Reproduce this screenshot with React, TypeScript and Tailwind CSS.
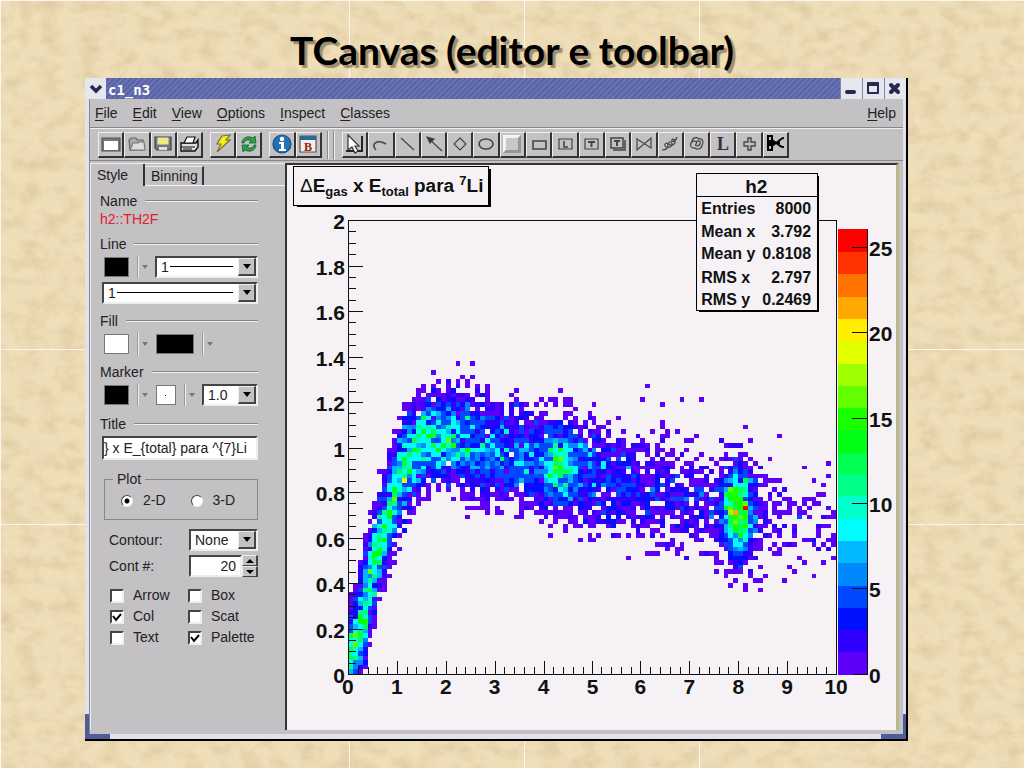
import { useMemo } from "react";
import type { ReactNode } from "react";

const menus = ["File", "Edit", "View", "Options", "Inspect", "Classes"];

const palette = [
  "#5c00fa", "#3000ff", "#0010ff", "#0048ff", "#0088ff",
  "#00b8ff", "#00fcff", "#00ffcc", "#00ff88", "#00ff50",
  "#00ff14", "#18ff00", "#62ff00", "#a0ff00", "#e2ff00",
  "#ffee00", "#ffa800", "#ff7400", "#ff3200", "#ff0000",
];

/* x, mean of y, sigma of y, height of the band */
const band = [
  [0, 0.04, 0.11, 13],
  [0.15, 0.12, 0.11, 12],
  [0.4, 0.35, 0.12, 11],
  [0.65, 0.58, 0.11, 11],
  [0.92, 0.78, 0.11, 11],
  [1.2, 0.93, 0.105, 10],
  [1.6, 1.03, 0.1, 10],
  [2.1, 1.04, 0.105, 8.5],
  [3, 0.98, 0.11, 6],
  [3.7, 0.94, 0.11, 4.4],
  [5, 0.88, 0.115, 4],
  [6, 0.82, 0.11, 2.4],
  [7, 0.77, 0.11, 1.7],
  [8, 0.72, 0.12, 1.2],
  [9, 0.68, 0.12, 0.6],
  [10, 0.65, 0.12, 0.5],
];

const clusters = [
  { x: 4.32, y: 0.92, sx: 0.2, sy: 0.09, n: 8 },
  { x: 8.0, y: 0.72, sx: 0.18, sy: 0.1, n: 18 },
];

const outliers = [
  [22, 68], [25, 68], [17, 66], [23, 65], [25, 65], [43, 62],
  [44, 60], [44, 59], [24, 34], [34, 34], [57, 25], [61, 63],
  [60, 60], [68, 60], [72, 60], [64, 59], [77, 21], [79, 20],
  [81, 19], [84, 20], [84, 18], [88, 52], [88, 30], [50, 29],
];

function bandAt(x: number) {
  let i = 0;
  while (i < band.length - 2 && band[i + 1][0] < x) i++;
  const a = band[i];
  const b = band[i + 1];
  const t = (x - a[0]) / (b[0] - a[0]);
  return [1, 2, 3].map((k) => a[k] + (b[k] - a[k]) * t);
}

function fillHistogram() {
  let seed = 8000;
  const random = () => {
    seed = (seed + 0x6d2b79f5) | 0;
    let t = Math.imul(seed ^ (seed >>> 15), 1 | seed);
    t = (t + Math.imul(t ^ (t >>> 7), 61 | t)) ^ t;
    return ((t ^ (t >>> 14)) >>> 0) / 4294967296;
  };
  const poisson = (mean: number) => {
    const limit = Math.exp(-mean);
    let n = 0;
    let p = random();
    while (p > limit) {
      n++;
      p *= random();
    }
    return n;
  };
  const cells: { i: number; j: number; n: number }[] = [];
  for (let i = 0; i < 100; i++) {
    const x = (i + 0.5) / 10;
    const [mean, sigma, height] = bandAt(x);
    for (let j = 0; j < 65; j++) {
      const y = (j + 0.5) / 50;
      const d = (y - mean) / sigma;
      let rate = Math.abs(d) < 2.9 ? height * Math.exp((-d * d) / 2) : 0;
      clusters.forEach((c) => {
        const dx = (x - c.x) / c.sx;
        const dy = (y - c.y) / c.sy;
        rate += c.n * Math.exp(-(dx * dx + dy * dy) / 2);
      });
      const n = Math.min(poisson(rate), 22);
      if (n > 0) cells.push({ i, j, n });
    }
  }
  outliers.forEach(([i, j]) => cells.push({ i, j, n: 1 }));
  cells.push({ i: 81, j: 36, n: 26 });
  return cells;
}

const binX = (i: number) => Math.round(348 + i * 4.89);
const binY = (j: number) => Math.round(675 - j * 4.55);

function Histogram() {
  const cells = useMemo(fillHistogram, []);
  const yLabels = ["0", "0.2", "0.4", "0.6", "0.8", "1", "1.2", "1.4", "1.6", "1.8", "2"];
  const stats = [
    ["Entries", "8000", 214],
    ["Mean x", "3.792", 237],
    ["Mean y", "0.8108", 259],
    ["RMS x", "2.797", 283],
    ["RMS y", "0.2469", 305],
  ] as const;

  return (
    <svg
      viewBox="287 165 610 566"
      className="block w-full bg-[#f5f1f5] font-['Liberation_Sans',sans-serif] font-bold"
      role="img"
      aria-label="Histogram h2"
    >
      {/* Bins */}
      <g shapeRendering="crispEdges">
        {cells.map(({ i, j, n }, k) => (
          <rect
            key={k}
            x={binX(i)}
            y={binY(j + 1)}
            width={binX(i + 1) - binX(i)}
            height={binY(j) - binY(j + 1)}
            fill={palette[Math.min(19, Math.floor(n / 1.32))]}
          />
        ))}
        {palette.map((color, i) => (
          <rect
            key={color}
            x="839"
            y={Math.round(675 - (i + 1) * 22.3)}
            width="29"
            height="23"
            fill={color}
          />
        ))}
      </g>

      {/* Frame and ticks */}
      <g stroke="#111" strokeWidth="1" fill="none" shapeRendering="crispEdges">
        <path d="M348.5 220.5H837.5V675.5H348.5Z" />
        <path d="M868.5 229V675.5H854" />
        {Array.from({ length: 41 }, (_, i) => (
          <path key={i} d={`M348 ${Math.round(675 - i * 11.375) + 0.5}h${i % 4 ? 8 : 15}`} />
        ))}
        {Array.from({ length: 51 }, (_, i) => (
          <path key={i} d={`M${Math.round(348 + i * 9.78) + 0.5} 675v-${i % 5 ? 7 : 13}`} />
        ))}
        {[5, 10, 15, 20, 25].map((v) => (
          <path key={v} d={`M853 ${Math.round(675 - v * 17.14) + 0.5}h15`} />
        ))}
      </g>
      <g fontSize="21" fill="#111">
        {yLabels.map((label, i) => (
          <text key={label} x="345" y={Math.round(684 - i * 45.5)} textAnchor="end">
            {label}
          </text>
        ))}
        {Array.from({ length: 11 }, (_, i) => (
          <text key={i} x={Math.round(348 + i * 48.9)} y="695" textAnchor="middle">
            {i}
          </text>
        ))}
        {[0, 5, 10, 15, 20, 25].map((v) => (
          <text key={v} x="870" y={Math.round(684 - v * 17.14)}>
            {v}
          </text>
        ))}
      </g>

      {/* Title box */}
      <g shapeRendering="crispEdges">
        <rect x="297" y="169" width="194" height="38" fill="#000" />
        <rect x="293.5" y="166.5" width="195" height="39" fill="#f5f1f5" stroke="#000" />
      </g>
      <text x="300" y="192" fontSize="19" fill="#111">
        <tspan fontWeight="400">Δ</tspan>E
        <tspan fontSize="13" dy="4">gas</tspan>
        <tspan dy="-4"> x E</tspan>
        <tspan fontSize="13" dy="4">total</tspan>
        <tspan dy="-4"> para </tspan>
        <tspan fontSize="13" dy="-7">7</tspan>
        <tspan dy="7">Li</tspan>
      </text>

      {/* Statistics box */}
      <g shapeRendering="crispEdges">
        <rect x="700" y="176" width="120" height="136" fill="#000" />
        <rect x="697.5" y="173.5" width="121" height="137" fill="#f5f1f5" stroke="#000" />
        <path d="M697 196.5h121" stroke="#000" />
      </g>
      <text x="757" y="193" fontSize="19" fill="#111" textAnchor="middle">
        h2
      </text>
      <g fontSize="16" fill="#111">
        {stats.map(([name, value, y]) => (
          <g key={name}>
            <text x="702" y={y}>{name}</text>
            <text x="812" y={y} textAnchor="end">{value}</text>
          </g>
        ))}
      </g>
    </svg>
  );
}

function Icon({ children }: { children: ReactNode }) {
  return (
    <svg viewBox="0 0 20 20" className="h-5 w-5 shrink-0" fill="none" stroke="#444" strokeWidth="1.2">
      {children}
    </svg>
  );
}

const fileTools: [string, ReactNode][] = [
  ["New canvas", <><path d="M1 4h18v13H1z" fill="#777" stroke="#555" /><path d="M3 7h14v9H3z" fill="#fff" stroke="none" /></>],
  ["Open", <><path d="M2 6l2-2h5l1 2h6v10H3z" fill="#aaa" stroke="#666" /><path d="M3 16L6 9l5 0 1-1h5l1 8z" fill="#ddd" stroke="#777" /></>],
  ["Save", <><path d="M2 3h16v13H4l-2-2z" fill="#777" stroke="#444" /><path d="M5 4h10v6H5z" fill="#f0f060" stroke="#ddd" /><path d="M6 13h8v3H6z" fill="#ddd" stroke="none" /></>],
  ["Print", <><path d="M2 9h15l2-3v7l-3 4H2z" fill="#ddd" stroke="#111" strokeWidth="1.4" /><path d="M5 9l3-6h8l-2 6z" fill="#fff" stroke="#111" /><path d="M2 13h14M4 15h9" stroke="#111" /></>],
];

const runTools: [string, ReactNode][] = [
  ["Interrupt", <path d="M9 2l8-1-4 5h4L4 18l4-8H4z" fill="#f5ee20" stroke="#77751c" />],
  ["Refresh", <><path d="M3 9c0-5 6-8 11-5l2-2 1 7h-7l2-2C9 5 6 6 5 9zM17 11c0 5-6 8-11 5l-2 2-1-7h7l-2 2c3 2 6 1 7-2z" fill="#26a146" stroke="#12602a" strokeWidth="0.8" /></>],
];

const inspectTools: [string, ReactNode][] = [
  ["Inspector", <><circle cx="10" cy="10" r="9" fill="#2272b4" stroke="#16507f" /><circle cx="10" cy="5" r="2.2" fill="#fff" stroke="none" /><path d="M7 8h5v7h2v2H7v-2h2v-5H7z" fill="#fff" stroke="none" /></>],
  ["Browser", <><path d="M2 2h16v16H2z" fill="#f3ede6" stroke="#555" /><path d="M2 2h16v4H2z" fill="#286b96" stroke="none" /><text x="10" y="17" textAnchor="middle" fontSize="12" fontWeight="700" fill="#8c2414" stroke="none" className="font-['Liberation_Serif',serif]">B</text></>],
];

const drawTools: [string, ReactNode][] = [
  ["Modify", <><path d="M1 17h16V2" stroke="#222" strokeWidth="2" /><path d="M3 1l11 11-4 0 3 5-3 2-3-6-4 3z" fill="#fff" stroke="#333" /></>],
  ["Arc", <path d="M5 16C-1 10 6 5 15 10" strokeWidth="1.6" />],
  ["Line", <path d="M4 4l13 12" />],
  ["Arrow", <><path d="M4 4l14 13" /><path d="M3 3l7 2-4 4z" fill="#333" /></>],
  ["Diamond", <path d="M10 4l6 6-6 6-6-6z" />],
  ["Ellipse", <ellipse cx="10" cy="10" rx="7" ry="5" strokeWidth="1.6" />],
  ["Pad", <><path d="M1 1h18v18H1z" fill="#c5cac2" stroke="none" /><path d="M1 19V1h18l-3 3H4v12z" fill="#f2f5ef" stroke="none" /><path d="M19 1v18H1l3-3h12V4z" fill="#949a92" stroke="none" /></>],
  ["Pave", <path d="M4 7h13v8H4z" strokeWidth="1.6" />],
  ["PaveLabel", <><path d="M4 5h13v10H4z" /><path d="M9 7v6h4" strokeWidth="1.6" /></>],
  ["PaveText", <><path d="M4 5h13v10H4z" /><path d="M7 8h7M10.500 8v5" strokeWidth="2" /></>],
  ["PavesText", <><path d="M3 4h12v10H3zM5 16h12V6" strokeWidth="1.5" /><path d="M6 7h6M9 7v5" strokeWidth="2" /></>],
  ["Graph", <path d="M3 4v12L17 4v10L3 5" />],
  ["CurlyLine", <path d="M2 16c4 0 6-2 6-5s-4-2-3 1c2 3 7 1 7-2s-4-3-3 0c2 3 7 0 6-3s-4-2-3 0c1 1 4 0 5-4" />],
  ["CurlyArc", <path d="M5 8C5 3 10 3 12 5c4-1 5 4 3 6 0 4-5 5-7 3-4 1-6-4-3-6 3-2 6 0 4 2s3 3 4 0-2-4-4-2" />],
  ["Text", <text x="10" y="16" textAnchor="middle" fontSize="18" fontWeight="700" fill="#333" stroke="none" className="font-['Liberation_Serif',serif]">L</text>],
  ["Marker", <path d="M9 4h3v4h4v4h-4v4H9v-4H5V8h4z" strokeWidth="1.4" />],
  ["Cut", <g stroke="#000" strokeWidth="2"><path d="M3 2h4v5H3zM3 11h4v5H3z" /><path d="M7 6l4 3c3 1 4 5 8 4M7 12l4-3c3-1 4-5 8-5M2 9h13" /></g>],
];

function ToolGroup({ tools, className }: { tools: [string, ReactNode][]; className: string }) {
  return (
    <div className={`flex h-[26px] ${className}`}>
      {tools.map(([name, icon]) => (
        <button
          key={name}
          aria-label={name}
          className="flex flex-1 items-center justify-center overflow-hidden border border-r-2 border-b-2 border-t-[#eee] border-r-[#333] border-b-[#333] border-l-[#eee]"
        >
          <Icon>{icon}</Icon>
        </button>
      ))}
    </div>
  );
}

function Heading({ children, className = "" }: { children: string; className?: string }) {
  return (
    <h2 className={`flex h-[18px] items-center gap-2 leading-[18px] ${className}`}>
      {children}
      <span className="h-[2px] flex-1 border-t border-b border-t-[#858585] border-b-[#f0f0f0]" />
    </h2>
  );
}

const sunken = "border-2 border-t-[#444] border-r-[#eee] border-b-[#eee] border-l-[#444] bg-white";

function Combo({ label, value, line, className }: { label: string; value: string; line?: boolean; className: string }) {
  return (
    <div className={`relative flex h-[22px] ${sunken} ${className}`}>
      <select
        aria-label={label}
        defaultValue={value}
        className="w-full appearance-none bg-white pl-1 leading-[18px] outline-none"
      >
        <option>{value}</option>
      </select>
      {line && <span className="pointer-events-none absolute top-[8px] right-[23px] left-[13px] h-px bg-black" />}
      <span className="pointer-events-none absolute top-0 right-0 flex h-[18px] w-[18px] items-center justify-center border border-r-2 border-b-2 border-t-[#eee] border-r-[#444] border-b-[#444] border-l-[#eee] bg-[#c3c1c3]">
        <svg viewBox="0 0 8 5" className="h-[5px] w-2">
          <path d="M0 0h8L4 5z" />
        </svg>
      </span>
    </div>
  );
}

function Swatch({ label, color, children }: { label: string; color: string; children?: ReactNode }) {
  return (
    <button aria-label={label} className="flex h-5 items-center">
      <span className={`flex h-5 items-center justify-center border border-[#777] ${color}`}>{children}</span>
      <span className="ml-2 h-[22px] w-[2px] border-r border-l border-r-[#eee] border-l-[#999]" />
      <svg viewBox="0 0 6 4" className="ml-[3px] h-1 w-[6px]">
        <path d="M0 0h6L3 4z" fill="#777" />
      </svg>
    </button>
  );
}

function Check({ label, checked }: { label: string; checked?: boolean }) {
  return (
    <label className="flex h-[21px] items-center">
      <span className="relative mr-[9px] flex h-[14px] w-[14px]">
        <input type="checkbox" defaultChecked={checked} className={`peer h-[14px] w-[14px] appearance-none ${sunken}`} />
        <svg viewBox="0 0 14 14" className="pointer-events-none absolute hidden h-[14px] w-[14px] peer-checked:block">
          <path d="M3 6l3 4 5-6" fill="none" stroke="#000" strokeWidth="2" />
        </svg>
      </span>
      {label}
    </label>
  );
}

function Radio({ label, checked }: { label: string; checked?: boolean }) {
  return (
    <label className="flex items-center gap-[10px]">
      <input
        type="radio"
        name="plot"
        defaultChecked={checked}
        className="h-3 w-3 appearance-none rounded-full border border-t-[#444] border-r-[#eee] border-b-[#eee] border-l-[#444] bg-white checked:bg-[radial-gradient(circle,#000_2px,#fff_3px)]"
      />
      {label}
    </label>
  );
}

function Editor() {
  return (
    <aside className="flex w-[195px] shrink-0 flex-col border-t border-l border-[#eee]">
      <div role="tablist" className="flex h-[22px]">
        <button role="tab" aria-selected="true" className="w-[54px] border-r-2 border-r-[#333] pr-1 pl-[6px] text-left leading-5">
          Style
        </button>
        <div className="flex flex-1 border-b border-[#f5f5f5]">
          <button role="tab" aria-selected="false" className="mt-[2px] border-t border-r-2 border-t-[#eee] border-r-[#333] pr-1 pl-[6px] leading-[18px]">
            Binning
          </button>
        </div>
      </div>

      <div className="mr-[27px] ml-[9px] flex flex-col pt-[6px]">
        <Heading>Name</Heading>
        <p className="h-5 leading-[18px] text-[#e0202c]">h2::TH2F</p>

        <Heading className="mt-[5px]">Line</Heading>
        <div className="mt-[3px] flex h-[22px] items-center justify-between pl-1">
          <Swatch label="Line color" color="w-[25px] bg-black" />
          <Combo label="Line width" value="1" line className="w-[103px]" />
        </div>
        <Combo label="Line style" value="1" line className="mt-1 ml-[2px]" />

        <Heading className="mt-2">Fill</Heading>
        <div className="mt-[3px] flex h-[22px] items-center gap-2 pl-1">
          <Swatch label="Fill color" color="w-[25px] bg-white" />
          <Swatch label="Fill pattern" color="w-[38px] bg-black" />
        </div>

        <Heading className="mt-2">Marker</Heading>
        <div className="mt-[3px] flex h-[22px] items-center justify-between pl-1">
          <Swatch label="Marker color" color="w-[25px] bg-black" />
          <Swatch label="Marker style" color="w-5 bg-white">
            <span className="h-px w-px bg-black" />
          </Swatch>
          <Combo label="Marker size" value="1.0" className="w-[56px]" />
        </div>

        <Heading className="mt-[9px]">Title</Heading>
        <input
          aria-label="Title"
          defaultValue="} x E_{total} para ^{7}Li"
          className={`mt-[3px] ml-[2px] h-6 min-w-0 outline-none ${sunken}`}
        />

        <fieldset className="mt-[10px] ml-1 h-[50px] border border-[#888] pl-4">
          <legend className="-ml-2 px-1 leading-[18px]">Plot</legend>
          <div className="flex gap-[25px] pt-[2px]">
            <Radio label="2-D" checked />
            <Radio label="3-D" />
          </div>
        </fieldset>

        <div className="mt-[9px] flex items-center justify-between pl-[9px]">
          Contour:
          <Combo label="Contour" value="None" className="w-[69px]" />
        </div>
        <div className="mt-1 flex items-center justify-between pl-[9px]">
          <label htmlFor="cont">Cont #:</label>
          <div className="flex h-[22px] w-[69px]">
            <input id="cont" defaultValue="20" className={`w-[53px] pr-1 text-right outline-none ${sunken}`} />
            <div className="flex flex-1 flex-col">
              {["M0 4h8L4 0z", "M0 0h8L4 4z"].map((arrow, i) => (
                <button
                  key={arrow}
                  aria-label={i ? "Decrease" : "Increase"}
                  className="flex flex-1 items-center justify-center border border-r-2 border-t-[#eee] border-r-[#444] border-b-[#444] border-l-[#eee]"
                >
                  <svg viewBox="0 0 8 4" className="h-1 w-2">
                    <path d={arrow} />
                  </svg>
                </button>
              ))}
            </div>
          </div>
        </div>

        <div className="mt-2 grid grid-cols-[78px_1fr] pl-[10px]">
          <Check label="Arrow" />
          <Check label="Box" />
          <Check label="Col" checked />
          <Check label="Scat" />
          <Check label="Text" />
          <Check label="Palette" checked />
        </div>
      </div>
    </aside>
  );
}

function Parchment() {
  return (
    <svg className="absolute inset-0 -z-10 h-full w-full" aria-hidden="true">
      <filter id="grain" x="0" y="0" width="100%" height="100%">
        <feTurbulence type="fractalNoise" baseFrequency="0.05 0.07" numOctaves="5" seed="6" />
        <feColorMatrix values="0 0 0 0 0.66  0 0 0 0 0.5  0 0 0 0 0.28  1.1 0 0 0 -0.42" />
      </filter>
      <rect width="100%" height="100%" fill="#efdfb9" />
      <rect width="100%" height="100%" filter="url(#grain)" />
      <path
        d="M349.500 0V2000M524.500 0V2000M699.500 0V2000M0 349.500H4000M0 524.500H4000M0 .5H4000M.5 0V2000"
        stroke="#fff"
        strokeOpacity="0.75"
      />
    </svg>
  );
}

export default function App() {
  return (
    <div className="relative isolate min-h-screen overflow-hidden pr-[116px] pb-[27px] pl-[85px] font-['Liberation_Sans',Arial,sans-serif] text-[14px] text-[#222]">
      <Parchment />
      <h1 className="-mr-[31px] flex h-[78px] items-center justify-center pt-[22px] text-center font-['Comic_Sans_MS','Lato',sans-serif] text-[39px] leading-[56px] font-bold whitespace-nowrap text-black [text-shadow:3px_3px_1px_#9d8e70]">
        TCanvas (editor e toolbar)
      </h1>

      <main className="border-r-2 border-b-2 border-black">
        {/* Title bar */}
        <div className="flex h-[21px] items-center bg-[repeating-linear-gradient(135deg,#5963a6_0px,#5963a6_2px,#6873b5_2px,#6873b5_4px)]">
          <button aria-label="Window menu" className="flex h-[21px] w-[21px] items-center justify-center bg-[#e6e6ef]">
            <svg viewBox="0 0 14 10" className="h-[10px] w-[14px]">
              <path d="M2 2l5 5 5-5" fill="none" stroke="#252b50" strokeWidth="3.500" />
            </svg>
          </button>
          <span className="flex-1 pt-[2px] pl-[2px] font-['DejaVu_Sans_Mono',monospace] text-[14px] leading-5 font-bold text-white">
            c1_n3
          </span>
          {[
            ["Minimize", "M6 14h7"],
            ["Maximize", "M5 5h10v10H5zM5 7h10"],
            ["Close", "M6 7l7 7M13 7l-7 7"],
          ].map(([name, path], i) => (
            <button key={name} aria-label={name} className="h-[21px] w-[22px] border-l border-[#8086a8] bg-[#e6e6ef]">
              <svg viewBox="0 0 20 21" className="h-[21px] w-5" fill="none" stroke="#252b50" strokeLinecap="round" strokeLinejoin="round">
                <path d={path} strokeWidth={i === 1 ? 2 : 4} />
              </svg>
            </button>
          ))}
        </div>

        <div className="relative bg-[#e2e2ec] pr-[3px] pb-[5px] pl-1">
          <span className="absolute right-0 bottom-0 h-[25px] w-[25px] bg-[#4f5c9c]" />
          <span className="absolute bottom-0 left-0 h-[25px] w-[25px] bg-[#4f5c9c]" />
          <div className="relative border-l border-l-[#888] bg-[#c3c1c3]">
            {/* Menu bar */}
            <nav className="flex h-[29px] items-center gap-[15px] border-b border-[#888] pt-px pr-[7px] pl-[5px]">
              {menus.map((menu) => (
                <button key={menu}>
                  <u className="underline-offset-2">{menu[0]}</u>
                  {menu.slice(1)}
                </button>
              ))}
              <button className="ml-auto">
                <u className="underline-offset-2">H</u>elp
              </button>
            </nav>

            {/* Toolbar */}
            <div className="flex h-[33px] items-center border-t border-b border-t-[#eee] border-b-[#888] pl-2">
              <ToolGroup tools={fileTools} className="w-[105px]" />
              <ToolGroup tools={runTools} className="ml-[7px] w-[52px]" />
              <ToolGroup tools={inspectTools} className="ml-[7px] w-[53px]" />
              <span className="ml-[5px] h-7 w-[2px] border-r border-l border-r-[#eee] border-l-[#888]" />
              <span className="ml-1 h-7 w-[2px] border-r border-l border-r-[#eee] border-l-[#888]" />
              <ToolGroup tools={drawTools} className="ml-[7px] w-[447px]" />
            </div>

            <div className="flex pt-[2px] pr-1 pb-1">
              <Editor />
              <div className="min-w-0 flex-1 border-t-2 border-r-[3px] border-l-2 border-t-[#333] border-r-[#b9b98c] border-l-[#333]">
                <Histogram />
              </div>
            </div>
          </div>
        </div>
      </main>
    </div>
  );
}
